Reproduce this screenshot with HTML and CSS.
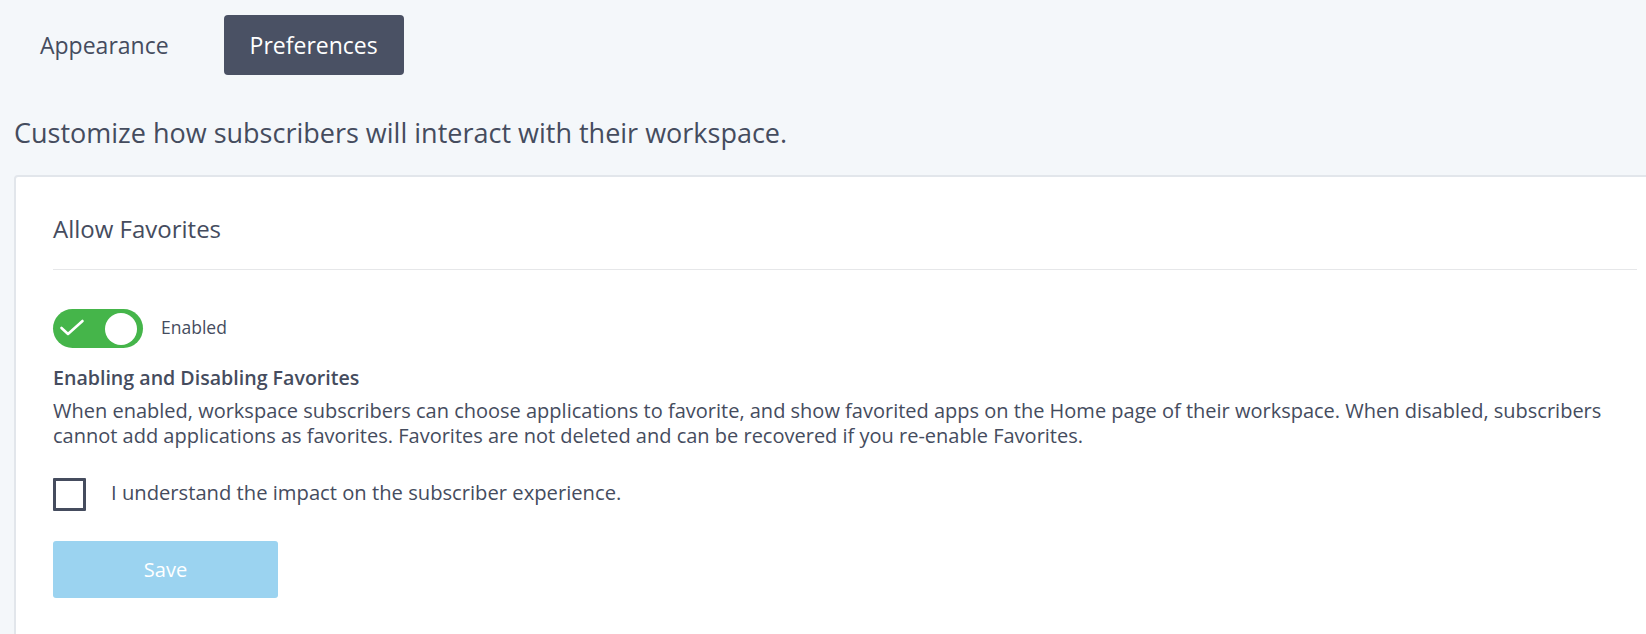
FILE: index.html
```html
<!DOCTYPE html>
<html lang="en">
<head>
    <meta charset="UTF-8">
    <meta name="viewport" content="width=device-width, initial-scale=1.0">
    <title>Workspace Preferences</title>
    <link rel="stylesheet" href="styles.css">
</head>
<body>

    <div class="page">
        <nav class="tabs">
            <a class="tab" href="#">Appearance</a>
            <a class="tab active" href="#">Preferences</a>
        </nav>

        <h1 class="intro">Customize how subscribers will interact with their workspace.</h1>

        <div class="card">
            <div class="card-header">
                <h2>Allow Favorites</h2>
            </div>

            <div class="toggle-row">
                <span class="toggle on">
                    <svg class="toggle-check" width="90" height="39" viewBox="0 0 90 39">
                        <path d="M8.5 19 L15 25 L29.5 12" fill="none" stroke="#fff" stroke-width="2.6" stroke-linecap="round" stroke-linejoin="round"/>
                    </svg>
                    <span class="toggle-knob"></span>
                </span>
                <span class="toggle-label">Enabled</span>
            </div>

            <h3 class="section-title">Enabling and Disabling Favorites</h3>
            <p class="section-text">When enabled, workspace subscribers can choose applications to favorite, and show favorited apps on the Home page of their workspace. When disabled, subscribers cannot add applications as favorites. Favorites are not deleted and can be recovered if you re-enable Favorites.</p>

            <label class="confirm">
                <span class="checkbox"></span>
                <span class="confirm-text">I understand the impact on the subscriber experience.</span>
            </label>

            <button class="save" type="button" disabled>Save</button>
        </div>
    </div>

</body>
</html>
```

FILE: styles.css
```css
body {
    margin: 0;
    padding: 0;
    background-color: #f4f7fa;
    color: #454c5e;
    font-family: "Open Sans", "Noto Sans", sans-serif;
    overflow: hidden;
}
.page {
    padding: 15px 0 0 14px;
}
.tabs {
    display: flex;
    gap: 29px;
}
.tab {
    display: block;
    height: 60px;
    line-height: 60px;
    padding: 0 26px;
    font-size: 23px;
    color: #454c5e;
    text-decoration: none;
    border-radius: 4px;
}
.tab.active {
    background-color: #4a5164;
    color: #fff;
}
.intro {
    margin: 42px 0 26px 0;
    font-size: 27px;
    line-height: 32px;
    font-weight: 400;
}
.card {
    width: 1662px;
    box-sizing: border-box;
    background-color: #fff;
    border: 2px solid #e2e6eb;
    border-radius: 4px;
    padding: 37px 37px 40px 37px;
}
.card-header {
    padding-bottom: 25px;
    border-bottom: 1px solid #e6e7e9;
}
.card-header h2 {
    margin: 0;
    font-size: 24px;
    line-height: 30px;
    font-weight: 400;
}
.toggle-row {
    display: flex;
    align-items: center;
    gap: 18px;
    margin-top: 39px;
}
.toggle {
    position: relative;
    width: 90px;
    height: 39px;
    border-radius: 20px;
    background-color: #45b54a;
}
.toggle-check {
    display: block;
}
.toggle-knob {
    position: absolute;
    top: 3.5px;
    right: 6px;
    width: 32px;
    height: 32px;
    border-radius: 50%;
    background-color: #fff;
}
.toggle-label {
    font-size: 17.5px;
    padding-bottom: 4px;
}
.section-title {
    margin: 17px 0 7px 0;
    font-size: 19.6px;
    line-height: 26px;
    font-weight: 600;
}
.section-text {
    margin: 0;
    font-size: 20px;
    line-height: 25px;
}
.confirm {
    display: flex;
    align-items: center;
    gap: 25px;
    margin-top: 30px;
    font-size: 20.2px;
}
.confirm-text {
    padding-bottom: 5px;
}
.checkbox {
    width: 33px;
    height: 33px;
    box-sizing: border-box;
    border: 3px solid #454c5e;
    border-radius: 1px;
}
.save {
    display: block;
    margin-top: 30px;
    width: 225px;
    height: 57px;
    border: none;
    border-radius: 3px;
    background-color: #9bd3f0;
    color: #fff;
    font-family: "Open Sans", "Noto Sans", sans-serif;
    font-size: 20px;
}
```
